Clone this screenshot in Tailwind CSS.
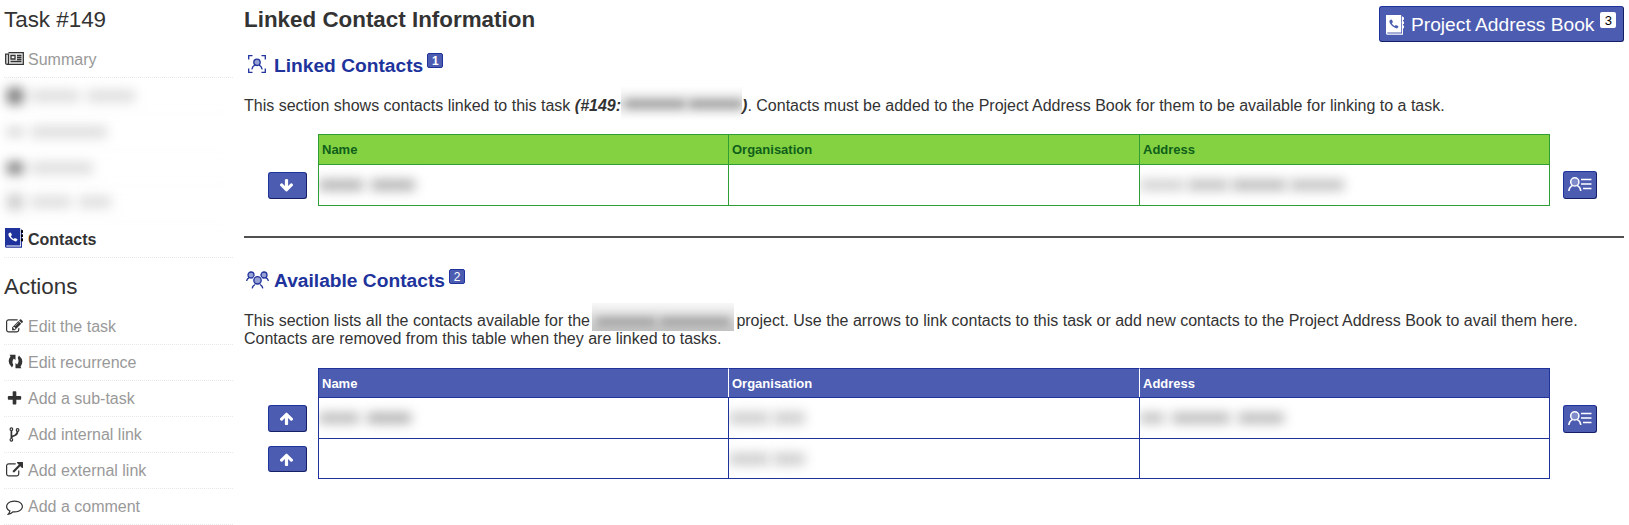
<!DOCTYPE html>
<html lang="en">
<head>
<meta charset="utf-8">
<title>Task #149 - Contacts</title>
<script src="https://cdn.jsdelivr.net/npm/@tailwindcss/browser@4"></script>
</head>
<body class="h-screen bg-white text-[#333] text-[16px] leading-[18px] font-['Liberation_Sans',Arial,sans-serif] overflow-hidden">
<svg width="0" height="0" class="hidden">
  <symbol id="up" viewBox="0 0 1792 1792"><path d="M1675 971q0 51-37 90l-75 75q-38 38-91 38-54 0-90-38l-294-293v704q0 52-37.5 84.5t-90.5 32.5h-128q-53 0-90.5-32.5t-37.5-84.5v-704l-294 293q-36 38-90 38t-90-38l-75-75q-38-38-38-90 0-53 38-91l651-651q35-37 90-37 54 0 91 37l651 651q37 39 37 91z"/></symbol>
  <symbol id="down" viewBox="0 0 1792 1792"><path d="M1675 832q0 53-37 90l-651 652q-39 37-91 37-53 0-90-37l-651-652q-38-36-38-90 0-53 38-91l74-75q39-37 91-37 53 0 90 37l294 294v-704q0-52 38-90t90-38h128q52 0 90 38t38 90v704l294-294q37-37 90-37 52 0 91 37l75 75q37 39 37 91z"/></symbol>
  <symbol id="book" viewBox="0 0 18 20"><path d="M0 0h15.2v17.4H1.3v1.1H16V1.5h1v18.2H1Q0 19.7 0 18.6z"/><path d="M15.9 2.2h2.1v2.6h-2.1zM15.9 6.4h2.1v2.6h-2.1zM15.9 10.6h2.1v2.6h-2.1z"/></symbol>
  <symbol id="phone" viewBox="0 0 10 10"><path d="M.6 1.5 2 .5q.5-.2.8.3l1 1.7q.2.5-.2.9l-.8.8q.9 1.900 2.900 2.900l.9-.8q.4-.3.8-.1l1.700.9q.5.3.2.8l-1 1.400Q7.500 9.900 5 8.300 2.500 6.800 1 4.500 0 2.600.6 1.500z"/></symbol>
  <symbol id="card" viewBox="0 0 24 15"><g fill="none" stroke="#fff" stroke-width="1.500"><circle cx="6.800" cy="4.900" r="4.100" fill="#7f8bcb"/><path d="M.8 14q.3-3.800 3.700-5.600M12.800 14q-.3-3.800-3.700-5.600"/><path d="M13 2.500h10.500M15 11.500h8.500"/><path stroke="#d5d9ee" stroke-width="2" d="M13 7h10.500"/></g></symbol>
</svg>
<div class="flex">
  <aside class="ml-1 w-[229px] shrink-0">
    <h2 class="h-[42px] text-[22.4px] leading-[40px]">Task #149</h2>
    <ul class="text-[#999]">
      <li class="flex h-9 items-center gap-1 border-b border-dotted border-[#e8e8e8]">
        <svg class="-mt-[2px] ml-px h-[13px] w-[19px]" viewBox="0 0 19 13" fill="none" stroke="#333" stroke-width="1.300"><path fill="#eee" d="M3.500.7h14.800v11.600H2.200Q.7 12.300.7 11V2.200h2.800V11q0 1.300-1.300 1.300"/><path fill="#fff" d="M6 3.500h4v3.500H6z"/><path d="M12 3.500h4.500M12 5.500h4.500M12 7.500h4.500M5.500 9.500h11"/></svg>Summary</li>
      <li class="flex h-9 items-center gap-2 border-b border-dotted border-[#e8e8e8] blur-[6px]"><i class="ml-[3px] h-4 w-4 bg-[#777]"></i><i class="h-3 w-12 bg-[#ddd]"></i><i class="h-3 w-12 bg-[#ddd]"></i></li>
      <li class="flex h-9 items-center gap-2 border-b border-dotted border-[#e8e8e8] blur-[6px]"><i class="ml-[3px] h-2 w-4 bg-[#ccc]"></i><i class="h-3 w-[76px] bg-[#ddd]"></i></li>
      <li class="flex h-9 items-center gap-2 border-b border-dotted border-[#e8e8e8] blur-[6px]"><i class="ml-[3px] h-3 w-4 bg-[#777]"></i><i class="h-3 w-[62px] bg-[#ddd]"></i></li>
      <li class="flex h-9 items-center gap-2 border-b border-dotted border-[#e8e8e8] pb-1 blur-[6px]"><i class="ml-[3px] h-4 w-4 bg-[#ccc]"></i><i class="h-3 w-10 bg-[#ddd]"></i><i class="h-3 w-8 bg-[#ddd]"></i></li>
      <li class="flex h-9 items-center gap-[5px] border-b border-dotted border-[#e8e8e8] font-bold text-[#333]">
        <span class="relative -mt-[3px] ml-px h-5 w-[18px] shrink-0"><svg class="h-5 w-[18px] fill-[#20339c]"><use href="#book"/></svg><svg class="absolute top-[4px] left-[3px] h-[10px] w-[10px] fill-white"><use href="#phone"/></svg><svg class="absolute top-0 left-0 h-5 w-[18px] fill-black" viewBox="0 0 18 20"><path d="M16 2.200h2v2.600h-2zM16 6.400h2v2.600h-2zM16 10.600h2v2.600h-2z"/></svg></span>Contacts</li>
    </ul>
    <h2 class="h-[51px] pt-[10px] text-[22.4px] leading-[37px]">Actions</h2>
    <ul class="text-[#999] [&_svg]:fill-[#333]">
      <li class="flex h-9 items-center gap-[5px] border-b border-dotted border-[#e8e8e8]"><svg class="-mt-px ml-[2px] h-[17px] w-[17px]" viewBox="0 0 1792 1792"><path d="M888 1184l116-116-152-152-116 116v56h96v96h56zm440-720q-16-16-33 1l-350 350q-17 17-1 33t33-1l350-350q17-17 1-33zm80 594v190q0 119-84.5 203.5t-203.5 84.5h-832q-119 0-203.5-84.5t-84.5-203.5v-832q0-119 84.5-203.5t203.5-84.5h832q63 0 117 25 15 7 18 23 3 17-9 29l-49 49q-14 14-32 8-23-6-45-6h-832q-66 0-113 47t-47 113v832q0 66 47 113t113 47h832q66 0 113-47t47-113v-126q0-13 9-22l64-64q15-15 35-7t20 29zm-96-738l288 288-672 672h-288v-288zm444 132l-92 92-288-288 92-92q28-28 68-28t68 28l152 152q28 28 28 68t-28 68z"/></svg>Edit the task</li>
      <li class="flex h-9 items-center gap-[5px] border-b border-dotted border-[#e8e8e8]"><svg class="-mt-[3px] ml-1 h-[15px] w-[15px]" viewBox="0 0 15 15"><path d="M3.800.8h3.700v5.300L5.800 4.500Q3.400 7.500 5.300 11L4 13.500Q-1.800 8.300 2.500 2.200L1.500.8zM11.200 14.200H7.500V8.900l1.700 1.600q2.400-3 .5-6.500L11 1.500q5.800 5.200 1.500 11.300l1 1.400z"/></svg>Edit recurrence</li>
      <li class="flex h-9 items-center gap-[5px] border-b border-dotted border-[#e8e8e8]"><svg class="-mt-px ml-[2px] h-[17px] w-[17px]" viewBox="0 0 1792 1792"><path d="M1600 736v192q0 40-28 68t-68 28h-416v416q0 40-28 68t-68 28h-192q-40 0-68-28t-28-68v-416h-416q-40 0-68-28t-28-68v-192q0-40 28-68t68-28h416v-416q0-40 28-68t68-28h192q40 0 68 28t28 68v416h416q40 0 68 28t28 68z"/></svg>Add a sub-task</li>
      <li class="flex h-9 items-center gap-2 border-b border-dotted border-[#e8e8e8]"><svg class="-mt-px ml-[5px] h-[15px] w-[11px]" viewBox="0 0 11 15"><g fill="#fff" stroke="#333" stroke-width="1.200"><path fill="none" stroke-width="1.700" d="M2.400 3.500v8M2.600 10.500q.3-1.300 3-2 2.900-.9 2.900-4.500"/><circle cx="2.400" cy="2.200" r="1.300"/><circle cx="8.600" cy="3" r="1.300"/><circle cx="2.400" cy="12.800" r="1.300"/></g></svg>Add internal link</li>
      <li class="flex h-9 items-center gap-[5px] border-b border-dotted border-[#e8e8e8]"><svg class="-mt-px ml-[2px] h-[17px] w-[17px]" viewBox="0 0 1792 1792"><path d="M1408 928v320q0 119-84.5 203.5t-203.5 84.5h-832q-119 0-203.5-84.5t-84.5-203.5v-832q0-119 84.5-203.5t203.5-84.5h704q14 0 23 9t9 23v64q0 14-9 23t-23 9h-704q-66 0-113 47t-47 113v832q0 66 47 113t113 47h832q66 0 113-47t47-113v-320q0-14 9-23t23-9h64q14 0 23 9t9 23zm384-864v512q0 26-19 45t-45 19-45-19l-176-176-652 652q-10 10-23 10t-23-10l-114-114q-10-10-10-23t10-23l652-652-176-176q-19-19-19-45t19-45 45-19h512q26 0 45 19t19 45z"/></svg>Add external link</li>
      <li class="flex h-9 items-center gap-[5px] border-b border-dotted border-[#e8e8e8]"><svg class="ml-[2px] h-[17px] w-[17px]" viewBox="0 0 1792 1792"><path d="M896 384q-204 0-381.5 69.500t-282 187.500-104.500 255q0 112 71.500 213.500t201.500 175.500l87 50-27 96q-24 91-70 172 152-63 275-171l43-38 57 6q69 8 130 8 204 0 381.500-69.500t282-187.500 104.500-255-104.500-255-282-187.500-381.500-69.500zm896 512q0 174-120 321.500t-326 233-450 85.500q-70 0-145-8-198 175-460 242-49 14-114 22h-5q-15 0-27-10.500t-16-27.500v-1q-3-4-.5-12t2-10 4.500-9.500l6-9 7-8.500 8-9q7-8 31-34.500t34.500-38 31-39.500 32.500-51 27-59 26-76q-157-89-247.500-220t-90.500-281q0-174 120-321.500t326-233 450-85.500 450 85.500 326 233 120 321.500z"/></svg>Add a comment</li>
    </ul>
  </aside>

  <main class="ml-[11px] w-[1380px] shrink-0">
    <header class="flex h-[53px] items-start justify-between">
      <h1 class="text-[22.4px] leading-[40px] font-bold">Linked Contact Information</h1>
      <a class="mt-[6px] flex h-9 w-[245px] items-start rounded-[3px] border border-[#20339c] border-r-[#141f66] border-b-[#141f66] bg-[#4c5cb1] pl-[6px] text-[19.200px] text-white">
        <span class="relative mt-2 h-5 w-[18px] shrink-0"><svg class="h-5 w-[18px] fill-white"><use href="#book"/></svg><svg class="absolute top-[4px] left-[3px] h-[10px] w-[10px] fill-[#4c5cb1]"><use href="#phone"/></svg></span>
        <span class="ml-[7px] leading-[35px] whitespace-nowrap">Project Address Book</span>
        <span class="mt-[5px] ml-[6px] h-4 w-4 shrink-0 rounded-[2px] bg-white text-center text-[13px] leading-[17px] text-black">3</span>
      </a>
    </header>

    <h3 class="flex h-[44px] items-start text-[19.200px] leading-[26px] font-bold text-[#20339c]">
      <svg class="mt-[2px] ml-1 h-[18px] w-[18px]" viewBox="0 0 18 18" fill="none" stroke="#20339c" stroke-width="1.300"><path d="M.7 4.500V.7h3.800M13.500.7h3.800v3.800M17.300 13.500v3.800h-3.800M4.500 17.300H.7v-3.800"/><circle cx="9" cy="7.300" r="3.200" fill="#98a1d4"/><path d="M3.800 14.300q.6-3 3.300-4.400M14.200 14.300q-.6-3-3.300-4.400"/></svg>
      <span class="ml-2">Linked Contacts</span>
      <span class="ml-1 h-[15px] w-4 rounded-[2px] border border-[#20339c] bg-[#4c5cb1] text-center text-[12px] leading-[14px] text-white">1</span>
    </h3>
    <p class="flex h-[37px] whitespace-pre">This section shows contacts linked to this task <b class="italic">(#149:</b><span class="-mt-[10px] flex h-[34px] w-[121px] items-center gap-1 overflow-hidden bg-gradient-to-b from-[#fdfdfd] via-[#e6e6e6] to-white"><i class="ml-1 h-2 w-[60px] bg-[#999] blur-[5px]"></i><i class="h-2 w-[54px] bg-[#999] blur-[5px]"></i></span><b class="italic">)</b>. Contacts must be added to the Project Address Book for them to be available for linking to a task.</p>

    <section class="flex pl-6">
      <div class="w-[50px] pt-[38px]"><button class="flex h-[27px] w-[39px] items-center justify-center rounded-[3px] border border-[#20339c] border-r-[#141f66] border-b-[#141f66] bg-[#4c5cb1] pr-[3px]"><svg class="h-[15px] w-[15px] fill-white"><use href="#down"/></svg></button></div>
      <div class="grid h-[72px] w-[1232px] grid-cols-[410px_411px_410px] grid-rows-[30px_42px] border-r border-[#2e9e35] *:border-t *:border-l *:border-[#2e9e35]">
        <div class="bg-[#84d141] pl-[3px] text-[13px] leading-[29px] font-bold text-[#0f5f1b]">Name</div>
        <div class="bg-[#84d141] pl-[3px] text-[13px] leading-[29px] font-bold text-[#0f5f1b]">Organisation</div>
        <div class="bg-[#84d141] pl-[3px] text-[13px] leading-[29px] font-bold text-[#0f5f1b]">Address</div>
        <div class="flex items-center gap-2 overflow-hidden border-b"><i class="h-[10px] w-11 bg-[#aaa] blur-[6px]"></i><i class="h-[10px] w-11 bg-[#aaa] blur-[6px]"></i></div>
        <div class="border-b"></div>
        <div class="flex items-center gap-1 overflow-hidden border-b"><i class="h-[10px] w-11 bg-[#ccc] blur-[6px]"></i><i class="h-[10px] w-10 bg-[#bbb] blur-[6px]"></i><i class="h-[10px] w-[54px] bg-[#b4b4b4] blur-[6px]"></i><i class="h-[10px] w-[54px] bg-[#bbb] blur-[6px]"></i></div>
      </div>
      <div class="pt-[37px] pl-[13px]"><button class="flex h-7 w-[34px] rounded-[3px] border border-[#20339c] border-r-[#141f66] border-b-[#141f66] bg-[#4c5cb1] pt-[5px] pl-1"><svg class="h-[15px] w-6"><use href="#card"/></svg></button></div>
    </section>

    <hr class="mt-[30px] h-[2px] border-0 bg-[#505050]">

    <h3 class="mt-[30px] flex h-[44px] items-start text-[19.200px] leading-[26px] font-bold text-[#20339c]">
      <svg class="mt-[3px] ml-[2px] h-[18px] w-[23px]" viewBox="0 0 23 18" stroke="#20339c" stroke-width="1.300"><g fill="#98a1d4"><circle cx="5" cy="4" r="3"/><circle cx="18" cy="4" r="3"/></g><path fill="none" d="M.6 10Q.9 7.800 3.100 6.600M22.400 10q-.3-2.200-2.500-3.400M6.200 17.400q.3-2.600 3-4.200M16.800 17.400q-.3-2.600-3-4.200"/><circle cx="11.500" cy="9.300" r="5" fill="#fff" stroke="none"/><circle cx="11.500" cy="9.300" r="3.700" fill="#98a1d4"/></svg>
      <span class="ml-[5px]">Available Contacts</span>
      <span class="mt-px ml-1 h-[15px] w-4 rounded-[2px] border border-[#20339c] bg-[#4c5cb1] text-center text-[12px] leading-[14px] font-normal text-white">2</span>
    </h3>
    <div class="h-[56px]">
      <p class="flex h-[18px] whitespace-pre">This section lists all the contacts available for the <span class="-mt-[9px] mr-[2px] -ml-[2px] flex h-7 w-[142px] items-end gap-1 overflow-hidden bg-gradient-to-b from-[#f8f8f8] to-[#c8c8c8] pb-[5px] pl-1"><i class="h-2 w-[60px] bg-[#999] blur-[5px]"></i><i class="h-2 w-[70px] bg-[#999] blur-[5px]"></i></span>project. Use the arrows to link contacts to this task or add new contacts to the Project Address Book to avail them here.</p>
      <p>Contacts are removed from this table when they are linked to tasks.</p>
    </div>

    <section class="flex pl-6">
      <div class="flex w-[50px] flex-col gap-[14px] pt-[37px]">
        <button class="flex h-[27px] w-[39px] items-center justify-center rounded-[3px] border border-[#20339c] border-r-[#141f66] border-b-[#141f66] bg-[#4c5cb1] pr-[3px]"><svg class="h-[15px] w-[15px] fill-white"><use href="#up"/></svg></button>
        <button class="flex h-[26px] w-[39px] items-center justify-center rounded-[3px] border border-[#20339c] border-r-[#141f66] border-b-[#141f66] bg-[#4c5cb1] pr-[3px]"><svg class="h-[15px] w-[15px] fill-white"><use href="#up"/></svg></button>
      </div>
      <div class="grid h-[111px] w-[1232px] grid-cols-[410px_411px_410px] grid-rows-[29px_41px_41px] border-r border-[#20339c] *:border-t *:border-l *:border-[#20339c]">
        <div class="bg-[#4c5cb1] pl-[3px] text-[13px] leading-[29px] font-bold text-white">Name</div>
        <div class="border-l-white! bg-[#4c5cb1] pl-[3px] text-[13px] leading-[29px] font-bold text-white">Organisation</div>
        <div class="border-l-white! bg-[#4c5cb1] pl-[3px] text-[13px] leading-[29px] font-bold text-white">Address</div>
        <div class="flex items-center gap-2 overflow-hidden"><i class="h-[10px] w-10 bg-[#b4b4b4] blur-[6px]"></i><i class="h-[10px] w-11 bg-[#aaa] blur-[6px]"></i></div>
        <div class="flex items-center gap-1 overflow-hidden"><i class="h-3 w-10 bg-[#ccc] blur-[6px]"></i><i class="h-3 w-8 bg-[#ccc] blur-[6px]"></i></div>
        <div class="flex items-center gap-2 overflow-hidden"><i class="h-[10px] w-6 bg-[#bbb] blur-[6px]"></i><i class="h-[10px] w-[58px] bg-[#b4b4b4] blur-[6px]"></i><i class="h-[10px] w-[46px] bg-[#b4b4b4] blur-[6px]"></i></div>
        <div class="border-b"></div>
        <div class="flex items-center gap-1 overflow-hidden border-b"><i class="h-3 w-10 bg-[#ccc] blur-[6px]"></i><i class="h-3 w-8 bg-[#ccc] blur-[6px]"></i></div>
        <div class="border-b"></div>
      </div>
      <div class="pt-[37px] pl-[13px]"><button class="flex h-7 w-[34px] rounded-[3px] border border-[#20339c] border-r-[#141f66] border-b-[#141f66] bg-[#4c5cb1] pt-[5px] pl-1"><svg class="h-[15px] w-6"><use href="#card"/></svg></button></div>
    </section>
  </main>
</div>
</body>
</html>
